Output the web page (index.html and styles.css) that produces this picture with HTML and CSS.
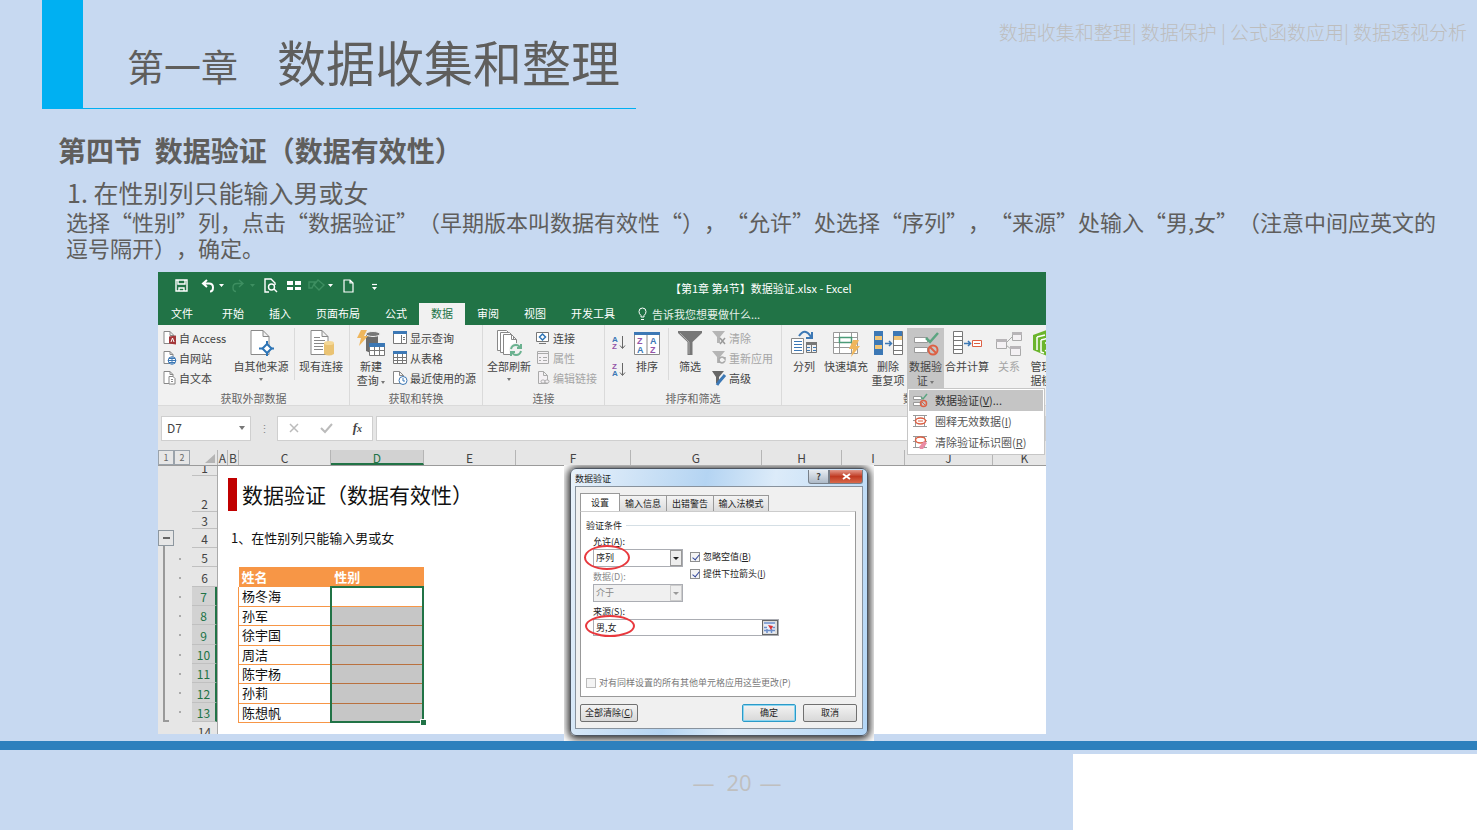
FILE: index.html
```html
<!DOCTYPE html>
<html lang="zh-CN">
<head>
<meta charset="utf-8">
<title>数据收集和整理</title>
<link rel="stylesheet" href="styles.css">
</head>
<body>
<main class="slide">
  <header class="top">
    <div class="accent"></div>
    <h1 class="chapter"><span class="chapter-no">第一章</span><span>数据收集和整理</span></h1>
    <nav class="crumbs">数据收集和整理| 数据保护 | 公式函数应用| 数据透视分析</nav>
  </header>

  <section class="lesson">
    <h2>第四节&nbsp; 数据验证（数据有效性）</h2>
    <h3>1. 在性别列只能输入男或女</h3>
    <p>选择“性别”列，点击“数据验证”（早期版本叫数据有效性“），“允许”处选择“序列”，“来源”处输入“男,女”（注意中间应英文的<br>逗号隔开），确定。</p>
  </section>

  <div class="stage">
  <section class="excel">
    <div class="titlebar">
      <svg class="qat" width="210" height="20" viewBox="0 0 210 20" fill="none" stroke="#fff" stroke-width="1.4">
        <path d="M6 4h11v11h-11zM8 4v4h7v-4M9 15v-3h5v3"/>
        <path d="M37 4l-4 3.500 4 3.500M33 7.500h6q4 0 4 4t-3 4" stroke-width="2"/>
        <path d="M49 8h5l-2.500 3zM158 8h5l-2.500 3zM202 11h5l-2.500 3z" fill="#fff" stroke="none"/>
        <path d="M69 4l4 3.500-4 3.500M73 7.500h-6q-4 0-4 4t3 4M139 6h6l-3 6h-3zM148 4l6 5-5 5-5-5z" stroke="#3d8e60"/>
        <path d="M80 8h5l-2.500 3z" fill="#3d8e60" stroke="none"/>
        <path d="M99 16h-4v-13h6l4 4v2"/><circle cx="101.500" cy="11" r="3"/><path d="M104 13l3 3"/>
        <path d="M117 5h6v4h-6zM125 5h6v4h-6zM117 11h6v3h-6zM125 11h6v3h-6z" fill="#fff" stroke="none"/>
        <path d="M174 4h6l3 3v9h-9zM180 4v3h3" stroke-width="1.200"/>
        <path d="M202 8.500h5" stroke-width="1.200"/>
      </svg>
      <span class="doc-name">【第1章 第4节】数据验证.xlsx - Excel</span>
    </div>

    <div class="tabs">
      <button class="file">文件</button><button>开始</button><button>插入</button><button>页面布局</button><button>公式</button><button class="on">数据</button><button>审阅</button><button>视图</button><button>开发工具</button>
      <span class="tell"><svg width="9" height="14" viewBox="0 0 9 14" fill="none" stroke="#fff"><path d="M3 10V8.500Q1 7 1 4.500a3.500 3.500 0 0 1 7 0Q8 7 6 8.500V10zM3 12.500h3"/></svg>告诉我您想要做什么...</span>
    </div>

    <div class="ribbon">
      <div class="group g1">
        <div class="tools">
          <div class="stack">
            <button><svg width="14" height="16" viewBox="0 0 14 16" fill="#fff" stroke="#888"><path d="M1 1.500h6l4 4v8h-10zM7 1.500v4h4"/><path d="M6 6.500l7-1v9l-7-1z" fill="#a4373a" stroke="none"/><path d="M8 12l1.500-4 1.500 4" fill="none" stroke="#fff"/></svg>自 Access</button>
            <button><svg width="14" height="16" viewBox="0 0 14 16" fill="#fff" stroke="#888"><path d="M1 1.500h6l3 3v9h-9zM7 1.500v3h3"/><circle cx="9" cy="10.500" r="3.800" stroke="#3c78b5"/><path d="M5 10.500h8M9 7v7M6 8.500h6M6 12.500h6" stroke="#3c78b5"/></svg>自网站</button>
            <button><svg width="14" height="16" viewBox="0 0 14 16" fill="#fff" stroke="#888"><path d="M1 1.500h6l3 3v9h-9zM7 1.500v3h3"/><path d="M6 6.500h4l2 2v5.500h-6zM8 9.500h2M8 11.500h2"/></svg>自文本</button>
          </div>
          <button class="big w60"><svg width="28" height="28" viewBox="0 0 28 28" fill="#fff" stroke="#888"><path d="M4 1.500h12l6 6v18h-18zM16 1.500v6h6"/><path d="M20 12v15M12 19.500h15" stroke="#2e75b6" stroke-width="2"/><path d="M20 15l4.500 4.500-4.500 4.500-4.500-4.500z" stroke="#2e75b6" stroke-width="2"/></svg><span>自其他来源</span><i class="caret"></i></button>
          <i class="rule"></i>
          <button class="big w52"><svg width="28" height="28" viewBox="0 0 28 28" fill="#fff" stroke="#888"><path d="M4 1.500h11l6 6v18h-17zM15 1.500v6h6M7 8.500h6M7 11.500h11M7 14.500h11M7 17.500h9M7 20.500h9"/><path d="M17 14v11q5 3 10 0v-11z" fill="#eac373" stroke="none"/><ellipse cx="22" cy="14" rx="5" ry="2" fill="#f4d795" stroke="none"/></svg><span>现有连接</span></button>
        </div>
        <div class="label">获取外部数据</div>
      </div>
      <div class="group g2">
        <div class="tools">
          <button class="big w42"><svg width="30" height="28" viewBox="0 0 30 28"><path d="M10 5v17q6 3 12 0v-17z" fill="#6b6b6b"/><ellipse cx="17" cy="5" rx="7" ry="2.500" fill="#777" stroke="#eee"/><path d="M5 1h6l-3 6h4l-9 10 2-8h-4z" fill="#efb65c"/><path d="M13.500 14.500h15v12h-15z" fill="#fff" stroke="#777"/><path d="M13 14h16v4h-16z" fill="#3c78b5"/><path d="M14 21.500h14M18.500 18v8M23.500 18v8" stroke="#777"/></svg><span>新建</span><span>查询 <i class="caret"></i></span></button>
          <div class="stack">
            <button><svg width="16" height="16" viewBox="0 0 16 16" fill="#fff" stroke="#777"><path d="M1.500 1.500h13v12h-13z"/><path d="M1 1h14v3h-14z" fill="#3c78b5" stroke="none"/><path d="M9.500 5v8M11 7.500h2M11 9.500h2"/></svg>显示查询</button>
            <button><svg width="16" height="16" viewBox="0 0 16 16" fill="#fff" stroke="#777"><path d="M1.500 1.500h13v12h-13zM1 7.500h13M1 10.500h13M5.500 4v10M10.500 4v10"/><path d="M1 1h14v3h-14z" fill="#3c78b5" stroke="none"/></svg>从表格</button>
            <button><svg width="16" height="16" viewBox="0 0 16 16" fill="#fff" stroke="#888"><path d="M1.500 1.500h6l4 4v8h-10zM7.500 1.500v4h4"/><circle cx="11" cy="10.500" r="4" stroke="#3c78b5"/><path d="M11 8v3h2" stroke="#3c78b5"/></svg>最近使用的源</button>
          </div>
        </div>
        <div class="label">获取和转换</div>
      </div>
      <div class="group g3">
        <div class="tools">
          <button class="big w52"><svg width="28" height="28" viewBox="0 0 28 28" fill="#fff" stroke="#888"><path d="M2.500 1.500h9l4 4v16h-13z"/><path d="M5.500 3.500h9l4 4v16h-13z"/><path d="M8.500 5.500h8l5 5v15h-13zM16.500 5.500v5h5"/><circle cx="21" cy="21" r="7" fill="#f1f1f1" stroke="none"/><path d="M16 20q1-4 5-4 3 0 4 3M26 15v4h-4M26 22q-1 4-5 4-3 0-4-3M16 27v-4h4" fill="none" stroke="#6bb290" stroke-width="2"/></svg><span>全部刷新</span><i class="caret"></i></button>
          <div class="stack">
            <button><svg width="16" height="16" viewBox="0 0 16 16" fill="#fff" stroke="#777"><path d="M1.500 2.500h12v9h-12zM4 13.500h7"/><path d="M7.500 4l3 3-3 3-3-3z" stroke="#2e75b6" stroke-width="1.500"/></svg>连接</button>
            <button disabled><svg width="16" height="16" viewBox="0 0 16 16" fill="#f4f1f4" stroke="#aaa"><path d="M2.500 1.500h11v12h-11zM3 3.500h10M4 7.500h2M8 7.500h4M4 10.500h2M8 10.500h4"/></svg>属性</button>
            <button disabled><svg width="16" height="16" viewBox="0 0 16 16" fill="#f4f1f4" stroke="#aaa"><path d="M3.500 1.500h5l4 4v8h-9zM8.500 1.500v4h4"/><rect x="6" y="10" width="4" height="3" rx="1.500"/><rect x="10" y="10" width="4" height="3" rx="1.500"/></svg>编辑链接</button>
          </div>
        </div>
        <div class="label">连接</div>
      </div>
      <div class="group g4">
        <div class="tools">
          <div class="az">
            <button aria-label="升序"><svg width="14" height="18" viewBox="0 0 14 18"><text x="0" y="8" class="a">A</text><text x="0" y="15" class="z">Z</text><path d="M10.500 2v12M8 11.500l2.500 3 2.500-3" fill="none" stroke="#666"/></svg></button>
            <button aria-label="降序"><svg width="14" height="18" viewBox="0 0 14 18"><text x="0" y="8" class="z">Z</text><text x="0" y="15" class="a">A</text><path d="M10.500 2v12M8 11.500l2.500 3 2.500-3" fill="none" stroke="#666"/></svg></button>
          </div>
          <button class="big w42"><svg width="28" height="28" viewBox="0 0 28 28"><path d="M1.500 3.500h25v22h-25zM14 4v21" fill="#fff" stroke="#888"/><path d="M1 3h26v3h-26z" fill="#3c78b5"/><text x="4" y="15" class="z lg">Z</text><text x="4" y="24" class="a lg">A</text><text x="17" y="15" class="a lg">A</text><text x="17" y="24" class="z lg">Z</text></svg><span>排序</span></button>
          <i class="rule"></i>
          <button class="big w42"><svg width="28" height="28" viewBox="0 0 28 28"><path d="M2 2h24v2l-9.500 9v13h-5v-13l-9.500-9z" fill="#777"/><path d="M4 4l9 9v12" stroke="#aaa" fill="none"/></svg><span>筛选</span></button>
          <div class="stack">
            <button disabled><svg width="16" height="16" viewBox="0 0 16 16"><path d="M1 1h13l-5 6v6h-3v-6z" fill="#b5b5b5"/><path d="M9 8l5 6M14 8l-5 6" stroke="#999" stroke-width="1.500"/></svg>清除</button>
            <button disabled><svg width="16" height="16" viewBox="0 0 16 16"><path d="M1 1h13l-5 6v6h-3v-6z" fill="#b5b5b5"/><path d="M8 9q3-4 6 0v-2M14 11q-3 4-6 0v2" fill="none" stroke="#a9a9a9" stroke-width="1.500"/></svg>重新应用</button>
            <button><svg width="16" height="16" viewBox="0 0 16 16"><path d="M1 1h12l-5 6v6h-3v-6z" fill="#666"/><path d="M14 5l-6 7-2 3" stroke="#3c78b5" stroke-width="3"/></svg>高级</button>
          </div>
        </div>
        <div class="label">排序和筛选</div>
      </div>
      <div class="group g5">
        <div class="tools">
          <button class="big w38"><svg width="28" height="28" viewBox="0 0 28 28"><path d="M1.500 9.500h12v15h-12z" fill="#fff" stroke="#888"/><path d="M4 12.500h8M4 15.500h8M4 18.500h8M4 21.500h8M17 18.500h3M23 18.500h3M17 21.500h3M23 21.500h3" stroke="#3c78b5"/><path d="M16.500 13.500h10v10h-10zM21.500 14v9" fill="none" stroke="#777"/><path d="M16 13h11v3h-11z" fill="#777"/><path d="M9 7q6-9 12 1M22 3v6h-6" fill="none" stroke="#3c78b5" stroke-width="2"/></svg><span>分列</span></button>
          <button class="big w46"><svg width="28" height="28" viewBox="0 0 28 28"><path d="M1.500 3.500h24v21h-24zM1 8.500h25M1 13.500h25M1 18.500h25M7.500 3v22M19.500 3v22" fill="#fff" stroke="#999"/><path d="M7.500 8.500h12v5h-12z" fill="#fff" stroke="#4b9b78" stroke-width="1.500"/><path d="M21 11h6l-3 6h4l-9 11 2-8h-4z" fill="#efb65c"/></svg><span>快速填充</span></button>
          <button class="big w38"><svg width="30" height="28" viewBox="0 0 30 28"><path d="M1 2h9v24h-9z" fill="#3c78b5"/><path d="M2 7h7v4h-7zM2 16h7v4h-7z" fill="#f0c476"/><path d="M20.500 2.500h9v23h-9zM20 16.500h9M20 21.500h9" fill="#fff" stroke="#777"/><path d="M20 2h9v5h-9z" fill="#3c78b5"/><path d="M21 7h8v4h-8z" fill="#f0c476"/><path d="M12 14.500h6M16 12l2.500 2.500-2.500 2.500" fill="none" stroke="#3c78b5" stroke-width="1.500"/></svg><span>删除</span><span>重复项</span></button>
          <button class="big w37 pressed"><svg width="28" height="28" viewBox="0 0 28 28"><path d="M2.500 8.500h13v5h-13zM2.500 18.500h13v5h-13z" fill="#fff" stroke="#999"/><path d="M14 9l4 4 8-9" fill="none" stroke="#5ca581" stroke-width="2.500"/><circle cx="21" cy="21" r="4.500" fill="none" stroke="#dd6044" stroke-width="2"/><path d="M18 18l6 6" stroke="#dd6044" stroke-width="2"/></svg><span>数据验</span><span>证 <i class="caret"></i></span></button>
          <button class="big w46"><svg width="30" height="28" viewBox="0 0 30 28"><path d="M1.500 2.500h9v22h-9zM1 7.500h9M1 11.500h9M1 16.500h9M1 20.500h9" fill="#fff" stroke="#777"/><path d="M12 14.500h6M16 12l2.500 2.500-2.500 2.500" fill="none" stroke="#3c78b5" stroke-width="1.500"/><path d="M20.500 11.500h9v6h-9zM22 14.500h6" fill="#fff" stroke="#dd6044"/></svg><span>合并计算</span></button>
          <button class="big w38" disabled><svg width="28" height="28" viewBox="0 0 28 28"><path d="M11 14l6-6M11 16l6 5" stroke="#aaa"/><path d="M1.500 10.500h10v9h-10zM17.500 3.500h9v8h-9zM15.500 17.500h10v9h-10z" fill="#f4f1f4" stroke="#aaa"/><path d="M1 10h11v3h-11zM17 3h10v3h-10zM15 17h11v3h-11z" fill="#b8b5b8"/></svg><span>关系</span></button>
          <button class="big w38"><svg width="34" height="28" viewBox="0 0 34 28"><path d="M3 6l14-5 14 5v15l-14 6-14-6z" fill="#6bb52c"/><path d="M7 8l8-2M7 8v13M11 11l8-2M11 11v12l3 1M15 14h6M18 12v8l-3 2" fill="none" stroke="#fff" stroke-width="1.500"/></svg><span>管理数</span><span>据模型</span></button>
        </div>
        <div class="label">数据工具</div>
      </div>
    </div>

    <div class="formula">
      <div class="name-box"><input aria-label="名称框" value="D7"><i class="caret"></i></div>
      <span class="dots">⋮</span>
      <div class="fx">
        <svg width="12" height="12" viewBox="0 0 12 12" stroke="#bbb" stroke-width="1.500"><path d="M2 2l8 8M10 2l-8 8"/></svg>
        <svg width="13" height="12" viewBox="0 0 13 12" fill="none" stroke="#bbb" stroke-width="2"><path d="M1 6l4 4 7-8"/></svg>
        <em>f<small>x</small></em>
      </div>
      <input class="formula-input" aria-label="编辑栏">
    </div>

    <div class="cols">
      <span class="lv">1</span><span class="lv">2</span><span class="corner"><svg width="14" height="11" viewBox="0 0 14 11"><path d="M12 1v9h-10z" fill="#b4b4b4"/></svg></span>
      <span>A</span><span>B</span><span>C</span><span class="sel">D</span><span>E</span><span>F</span><span>G</span><span>H</span><span>I</span><span>J</span><span>K</span>
    </div>

    <div class="sheet">
      <div class="outline">
        <button class="fold" aria-label="折叠"></button>
        <div class="bracket"></div>
        <div class="marks"><i></i><i></i><i></i><i></i><i></i><i></i><i></i><i></i><i></i></div>
      </div>
      <div class="rows">
        <span class="up">1</span><span class="low">2</span><span>3</span><span>4</span><span>5</span><span>6</span><span class="sel">7</span><span class="sel">8</span><span class="sel">9</span><span class="sel">10</span><span class="sel">11</span><span class="sel">12</span><span class="sel">13</span><span>14</span>
      </div>
      <div class="cells">
        <div class="sheet-title">数据验证（数据有效性）</div>
        <div class="sheet-note">1、在性别列只能输入男或女</div>
        <div class="table-wrap">
          <table>
            <thead><tr><th>姓名</th><th>性别</th></tr></thead>
            <tbody>
              <tr><td>杨冬海</td><td></td></tr>
              <tr><td>孙军</td><td></td></tr>
              <tr><td>徐宇国</td><td></td></tr>
              <tr><td>周洁</td><td></td></tr>
              <tr><td>陈宇杨</td><td></td></tr>
              <tr><td>孙莉</td><td></td></tr>
              <tr><td>陈想帆</td><td></td></tr>
            </tbody>
          </table>
          <div class="range"></div>
        </div>
      </div>
    </div>
  </section>

  <div class="menu" role="menu">
    <button class="hot"><svg width="16" height="16" viewBox="0 0 16 16"><path d="M1.500 4.500h8v3h-8zM1.500 10.500h8v3h-8z" fill="#fff" stroke="#999"/><path d="M9 5l2 2 4-5" fill="none" stroke="#5ca581" stroke-width="1.500"/><circle cx="11.500" cy="11.500" r="3" fill="none" stroke="#dd6044" stroke-width="1.500"/><path d="M9.500 9.500l4 4" stroke="#dd6044"/></svg><span>数据验证(<u>V</u>)...</span></button>
    <button><svg width="16" height="16" viewBox="0 0 16 16"><path d="M1 2.500h14M1 7.500h14M1 13.500h14M3.500 2v12M12.500 2v12" stroke="#999"/><ellipse cx="8.500" cy="8" rx="5" ry="3" fill="#fff" stroke="#dd6044" stroke-width="1.500"/><path d="M6 8h5" stroke="#dd6044"/></svg><span>圈释无效数据(<u>I</u>)</span></button>
    <button><svg width="16" height="16" viewBox="0 0 16 16"><path d="M1 2.500h14M1 7.500h14M1 13.500h14M3.500 2v12M12.500 2v12" stroke="#999"/><ellipse cx="8.500" cy="6" rx="5" ry="3" fill="#fff" stroke="#dd6044" stroke-width="1.500"/><path d="M7 13l5-6 3 2-4 6h-3z" fill="#e98ba4"/></svg><span>清除验证标识圈(<u>R</u>)</span></button>
  </div>

  <div class="halo">
    <form class="dialog" onsubmit="return false">
      <div class="dlg-title"><span>数据验证</span><div class="win-btns"><button type="button" class="help">?</button><button type="button" class="close" aria-label="关闭"><svg width="9" height="7" viewBox="0 0 9 7"><path d="M1 1l7 5M8 1l-7 5" stroke="#fff" stroke-width="2"/></svg></button></div></div>
      <div class="client">
        <div class="dlg-tabs"><button type="button" class="on">设置</button><button type="button">输入信息</button><button type="button">出错警告</button><button type="button">输入法模式</button></div>
        <div class="panel">
          <div class="legend">验证条件</div>
          <div class="fields">
            <div class="field-col">
              <label for="allow">允许(<u>A</u>):</label>
              <div class="combo"><select id="allow"><option>序列</option></select><i class="drop"></i><i class="ring"></i></div>
              <label for="data" class="dim">数据(D):</label>
              <div class="combo off"><select id="data" disabled><option>介于</option></select><i class="drop"></i></div>
              <label for="src">来源(<u>S</u>):</label>
            </div>
            <div class="checks">
              <label><input type="checkbox" checked><span>忽略空值(<u>B</u>)</span></label>
              <label><input type="checkbox" checked><span>提供下拉箭头(<u>I</u>)</span></label>
            </div>
          </div>
          <div class="source"><input id="src" value="男,女"><button type="button" aria-label="选择区域"><svg width="11" height="11" viewBox="0 0 11 11"><path d="M0 0h11v11h-11z" fill="#e9eef8"/><path d="M0 1h11M0 5.500h3M0 8.500h11M8.500 5.500h3M3 7v4M7.500 7v4" stroke="#6d8fc9" stroke-width="1.500"/><path d="M4 3l5 1-2 4z" fill="#d33"/></svg></button><i class="ring"></i></div>
          <label class="apply"><input type="checkbox" disabled><span>对有同样设置的所有其他单元格应用这些更改(P)</span></label>
        </div>
        <div class="actions"><button type="button">全部清除(<u>C</u>)</button><button type="button" class="ok">确定</button><button type="button" class="cancel">取消</button></div>
      </div>
    </form>
  </div>
  </div>

  <footer class="foot"><div class="page-no"><span>—</span><span>20</span><span>—</span></div><div class="blank"></div></footer>
</main>
</body>
</html>
```
FILE: styles.css
```css
* { box-sizing: border-box; }
body { margin: 0; background: #c7d9f1; color: #5f5e5c; font-family: "Noto Sans CJK SC", "Noto Sans", sans-serif; text-spacing-trim: space-all; }
button, input, select { font: inherit; color: inherit; margin: 0; padding: 0; border: 0; background: none; border-radius: 0; }
button { white-space: nowrap; }
i { font-style: normal; }
svg { flex: none; display: block; }
.slide { min-height: 100vh; display: flex; flex-direction: column; }

.top { display: flex; height: 109px; padding-left: 42px; }
.accent { width: 41px; background: #00b0f2; }
.chapter { margin: 0; width: 553px; padding: 26px 0 0 44px; display: flex; align-items: baseline; gap: 39px; border-bottom: 1px solid #00b0f2; font-size: 49px; line-height: 70px; font-weight: 400; white-space: nowrap; }
.chapter-no { font-size: 37px; }
.crumbs { margin-left: auto; padding: 18px 10px 0 0; font-size: 19px; line-height: 28px; font-weight: 300; color: #bdbdbd; white-space: nowrap; }

.lesson { padding: 21px 30px 0 58px; height: 163px; }
.lesson h2 { margin: 0; font-size: 28px; line-height: 40px; font-weight: 700; }
.lesson h3 { margin: 6px 0 0 9px; font-size: 25px; line-height: 32px; font-weight: 400; }
.lesson p { margin: 0 0 0 8px; font-size: 22px; line-height: 26px; white-space: nowrap; }

.stage { position: relative; margin-left: 158px; width: 60.12vw; padding-bottom: 7px; }
.excel { overflow: hidden; background: #fff; font-size: 11px; line-height: 14px; color: #444; }
.titlebar { display: flex; height: 31px; padding: 4px 0 0 12px; background: #217346; color: #fff; }
.doc-name { margin-left: 290px; padding-top: 5px; white-space: nowrap; }
.tabs { display: flex; height: 22px; background: #217346; color: #fff; white-space: nowrap; }
.tabs button { padding: 0 12px 3px 13px; }
.tabs .file { padding-right: 16px; }
.tabs .on { padding: 0 12px 3px; margin-right: -1px; background: #f1f1f1; color: #217346; }
.tell { display: flex; align-items: center; gap: 5px; margin-left: 11px; padding-bottom: 1px; color: #e4efe8; }

.ribbon { display: flex; height: 81px; background: #f1f1f1; border-bottom: 1px solid #dadada; }
.group { flex: none; padding-top: 3px; border-right: 1px solid #dadada; }
.tools { display: flex; height: 62px; }
.label { text-align: center; color: #666; line-height: 16px; }
.g1 { width: 192px; padding-left: 5px; }
.g2 { width: 133px; }
.g3 { width: 122px; }
.g4 { width: 177px; padding-left: 7px; }
.g5 { width: 284px; padding-left: 3px; }
.g1 .label { padding-right: 5px; }
.g4 .label { padding-right: 7px; }
.stack { display: flex; flex-direction: column; flex: none; }
.g1 .stack { width: 68px; }
.stack button { display: flex; align-items: center; gap: 2px; height: 20px; padding-bottom: 1px; }
.big { flex: none; display: flex; flex-direction: column; align-items: center; justify-content: flex-start; }
.big svg { margin: 1px 0 2px; }
.w60 { width: 60px; }
.w52 { width: 52px; }
.w46 { width: 46px; }
.w42 { width: 42px; }
.w38 { width: 38px; }
.w37 { width: 37px; }
button:disabled { color: #a5a5a5; }
.pressed { background: #c5c5c5; }
.rule { width: 1px; height: 52px; background: #dadada; }
.g1 .rule { margin-left: 3px; }
.caret { display: inline-block; width: 0; height: 0; border: 2px solid transparent; border-top: 3px solid #777; border-bottom: 0; vertical-align: middle; }
.big > .caret { margin-top: 5px; }
.az { display: flex; flex-direction: column; gap: 9px; padding-top: 6px; width: 14px; }
.az svg text { font: 700 8px "Liberation Sans", sans-serif; }
.a { fill: #3c78b5; }
.z { fill: #9455a8; }
.lg { font: 700 9px "Liberation Sans", sans-serif; }

.formula { display: flex; align-items: center; height: 44px; padding-left: 3px; background: #e6e6e6; }
.name-box { display: flex; align-items: center; justify-content: space-between; width: 90px; height: 25px; padding: 0 5px; background: #fff; border: 1px solid #cfcfcf; font-size: 12px; }
.name-box input { width: 60px; }
.name-box .caret { border-width: 4px 3px 0; }
.dots { width: 26px; text-align: center; color: #888; }
.fx { display: flex; align-items: center; justify-content: space-between; width: 96px; height: 25px; padding: 0 10px; background: #fff; border: 1px solid #cfcfcf; }
.fx em { font: italic 700 13px "Liberation Serif", serif; }
.fx small { font-size: 10px; }
.formula-input { flex: 1; min-width: 0; height: 25px; margin-left: 3px; background: #fff; border: 1px solid #cfcfcf; }

.cols { display: grid; grid-template-columns: 16px 16px 28px 10px 11px 92px 93px 92px 115px 131px 80px 63px 88px 64px; grid-template-rows: 15px; height: 16px; overflow: hidden; background: #e6e6e6; border-bottom: 1px solid #9b9b9b; font-size: 12px; line-height: 16px; text-align: center; }
.cols span { min-height: 0; border-right: 1px solid #b5b5b5; }
.cols .lv { border: 1px solid #9ba3ab; font-size: 9px; line-height: 13px; color: #666; }
.cols .corner { padding: 3px 0 0 13px; }
.cols .sel { background: #d2d2d2; color: #217346; border-bottom: 2px solid #217346; }

.sheet { display: flex; height: 268px; overflow: hidden; }
.outline { display: grid; grid-template-columns: 16px 1fr; grid-template-rows: 80px 1fr; width: 34px; padding-bottom: 12px; background: #e6e6e6; }
.fold { align-self: end; grid-column: 1; width: 16px; height: 16px; border: 1px solid #8d979f; display: flex; align-items: center; justify-content: center; }
.fold::before { content: ""; width: 7px; height: 2px; background: #666; }
.bracket { grid-row: 2; margin-left: 5px; width: 6px; border: solid #999; border-width: 0 0 2px 2px; }
.marks { grid-row: 2; grid-column: 2; display: flex; flex-direction: column; justify-content: space-around; align-items: center; padding: 3px 7px 0 0; }
.marks i { width: 2px; height: 2px; background: #aaa; }
.rows { display: grid; grid-template-rows: 10px 36px 17px 19px 19px 20px 19px 19px 20px 19px 19px 20px 19px 19px; width: 26px; background: #e6e6e6; border-right: 1px solid #aaa; font-size: 12px; text-align: center; color: #444; }
.rows span { display: flex; align-items: center; justify-content: center; min-height: 0; padding-top: 2px; border-bottom: 1px solid #c0c0c0; }
.rows .up { align-items: flex-end; line-height: 14px; padding: 0; }
.rows .low { align-items: flex-end; }
.rows .sel { background: #d2d2d2; color: #217346; border-right: 2px solid #217346; }
.cells { flex: 1; min-width: 0; color: #111; white-space: nowrap; }
.sheet-title { margin: 12px 0 0 10px; padding-left: 5px; height: 33px; border-left: 9px solid #c00000; font-size: 21px; line-height: 32px; }
.sheet-note { margin: 17px 0 0 13px; font-size: 13px; line-height: 20px; }
.table-wrap { position: relative; margin: 19px 0 0 20px; width: 186px; }
table { width: 186px; border-collapse: collapse; table-layout: fixed; font-size: 13px; line-height: 18px; }
th { height: 20px; padding: 0 3px; text-align: left; background: #f79646; color: #fff; font-weight: 700; border: 0; }
td { height: 19px; padding: 0 3px; border-bottom: 1px solid #f79646; }
tbody tr:nth-child(3n) td { height: 20px; }
td:first-child { border-left: 1px solid #f79646; }
tr + tr td + td { background: #c6c6c6; border-bottom-color: #b9713f; }
.range { position: absolute; left: 92px; right: 0; top: 19px; bottom: 0; border: 2px solid #217346; }
.range::after { content: ""; position: absolute; right: -4px; bottom: -4px; width: 5px; height: 5px; background: #217346; border: 1px solid #fff; border-width: 1px 0 0 1px; }

.menu { position: absolute; left: 749px; top: 116px; width: 138px; padding: 1px; background: #fff; border: 1px solid #c6c6c6; font-size: 11px; line-height: 14px; color: #555; }
.menu button { display: flex; align-items: center; gap: 7px; width: 100%; height: 21px; padding: 0 0 2px 3px; }
.menu .hot { background: #c5c5c5; color: #333; }

.halo { position: absolute; left: 406px; top: 193px; width: 310px; padding: 3px 6px 5px; overflow: hidden; background: #fff; }
.dialog { height: 268px; padding: 1px 4px 6px; border: 1px solid #4d5560; border-radius: 6px; background: linear-gradient(100deg, #e8f1fa, #b4d4f2 40%, #dcebf9 60%, #b3d6f6); box-shadow: 0 1px 8px 2px #222; font-size: 9px; line-height: 12px; color: #222; display: flex; flex-direction: column; }
.dlg-title { display: flex; justify-content: space-between; height: 20px; }
.dlg-title > span { padding-top: 3px; }
.win-btns { display: flex; height: 14px; }
.win-btns button { border: 1px solid #77808a; border-top: 0; }
.help { width: 21px; background: linear-gradient(#e8edf2, #adbac8); color: #444; font-weight: 700; line-height: 12px; border-radius: 0 0 0 3px; }
.close { width: 34px; display: flex; align-items: center; justify-content: center; background: linear-gradient(#e39a8c, #c03a22 50%, #d8694b); border-radius: 0 0 3px 0; }
.client { flex: 1; display: flex; flex-direction: column; padding: 6px 5px 6px 4px; background: #f0f0f0; border: 1px solid #88929d; }
.dlg-tabs { display: flex; align-items: flex-end; height: 18px; }
.dlg-tabs button { flex: none; width: 47px; height: 16px; border: 1px solid #999; border-left: 0; border-bottom: 0; background: linear-gradient(#f4f4f4, #dcdcdc); }
.dlg-tabs .on { width: 40px; height: 18px; border-left: 1px solid #999; background: #fff; }
.dlg-tabs button:last-child { width: 55px; }
.panel { height: 186px; padding: 7px 5px 0; background: #fff; border: 1px solid #999; border-top-color: #ccc; margin-right: 1px; }
.legend { display: flex; align-items: center; gap: 4px; height: 13px; }
.legend::after { content: ""; flex: 1; height: 1px; background: #d5dfe5; }
.fields { display: flex; gap: 7px; padding-left: 7px; }
.field-col { width: 90px; display: flex; flex-direction: column; }
.field-col label { height: 17px; line-height: 19px; }
.dim { color: #888; }
.combo { position: relative; height: 18px; border: 1px solid #abadb3; }
.combo select { appearance: none; width: 100%; height: 16px; padding-left: 2px; line-height: 16px; opacity: 1; }
.off { background: #f0f0f0; color: #888; }
.drop { position: absolute; right: 0; top: 0; width: 12px; height: 16px; border: 1px solid #999; background: #eee; pointer-events: none; }
.drop::after { content: ""; position: absolute; left: 2px; top: 6px; border: 3px solid transparent; border-top-color: #222; border-bottom: 0; }
.off .drop { border-color: #ccc; }
.off .drop::after { border-top-color: #999; }
.ring { position: absolute; left: -10px; top: -5px; width: 46px; height: 25px; border: 2px solid #e8383d; border-radius: 50%; pointer-events: none; }
.checks { display: flex; flex-direction: column; gap: 4px; padding-top: 18px; }
.checks label, .apply { display: flex; align-items: center; gap: 3px; height: 13px; white-space: nowrap; }
input[type="checkbox"] { appearance: none; flex: none; width: 10px; height: 10px; border: 1px solid #8e8f8f; background: #f4f4f4; }
input[type="checkbox"]:checked::before { content: ""; display: block; width: 3px; height: 6px; margin-left: 3px; border: solid #32479b; border-width: 0 1px 1px 0; rotate: 40deg; }
input[type="checkbox"]:disabled { border-color: #bbb; }
.source { position: relative; display: flex; width: 186px; height: 17px; margin-left: 7px; border: 1px solid #abadb3; }
.source input { flex: 1; min-width: 0; padding-left: 2px; }
.source button { width: 16px; border: 1px solid #666; background: #ddd; padding: 1px; }
.source .ring { left: -9px; top: -5px; width: 50px; height: 22px; }
.apply { margin-top: 40px; color: #777; }
.actions { display: flex; gap: 7px; margin-top: 7px; }
.actions button { width: 54px; height: 18px; border: 1px solid #707070; border-radius: 2px; background: linear-gradient(#f3f3f3, #d8d8d8); }
.actions button:first-child { width: 58px; margin-right: auto; }
.actions .ok { border-color: #2c9ac8; box-shadow: inset 0 0 0 1px #8bd5f0; }

.foot { position: relative; flex: 1; display: flex; justify-content: center; min-height: 89px; border-top: 9px solid #2e80bd; }
.page-no { display: flex; gap: 12px; padding: 17px 3px 0 0; font: 22px/30px "Open Sans", sans-serif; color: #bfbfbf; }
.page-no span:last-child { margin-left: -4px; }
.blank { position: absolute; right: 0; top: 4px; bottom: 0; width: 404px; background: #fff; }
```
